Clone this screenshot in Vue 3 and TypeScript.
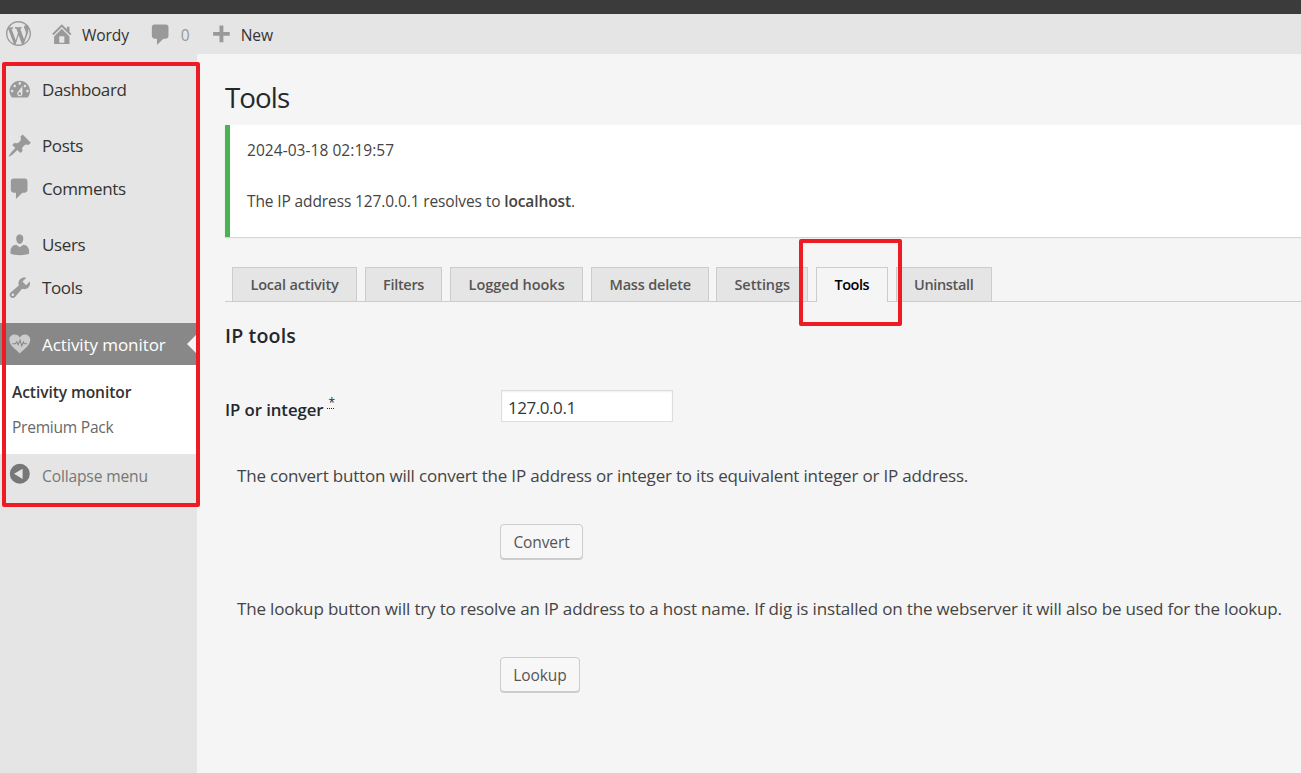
<script setup lang="ts">
interface MenuItem {
  label: string
  icon: string
  spaced?: boolean
}

const icons: Record<string, string> = {
  wordpress:
    'M20 10c0-5.51-4.49-10-10-10C4.48 0 0 4.49 0 10c0 5.52 4.48 10 10 10 5.51 0 10-4.48 10-10zM7.78 15.37L4.37 6.22c.55-.02 1.17-.08 1.17-.08.5-.06.44-1.13-.06-1.11 0 0-1.45.11-2.37.11-.18 0-.37 0-.58-.01C4.12 2.69 6.87 1.11 10 1.11c2.33 0 4.45.87 6.05 2.34-.68-.11-1.65.39-1.65 1.58 0 .74.45 1.36.9 2.1.35.61.55 1.36.55 2.46 0 1.49-1.4 5-1.4 5l-3.03-8.37c.54-.02.82-.17.82-.17.5-.05.44-1.25-.06-1.22 0 0-1.44.12-2.38.12-.87 0-2.33-.12-2.33-.12-.5-.03-.56 1.2-.06 1.22l.92.08 1.26 3.41zM17.41 10c.24-.64.74-1.87.43-4.25.7 1.29 1.05 2.71 1.05 4.25 0 3.29-1.73 6.24-4.4 7.78.97-2.59 1.94-5.2 2.92-7.78zM6.1 18.09C3.12 16.65 1.11 13.53 1.11 10c0-1.3.23-2.48.72-3.59C3.25 10.3 4.67 14.2 6.1 18.09zm4.03-6.63l2.58 6.98c-.86.29-1.76.45-2.71.45-.79 0-1.57-.11-2.29-.33.81-2.38 1.62-4.74 2.42-7.1z',
  home: 'M16 8.5l1.53 1.53-1.06 1.06L10 4.6l-6.47 6.49-1.06-1.06L10 2.5l4 4v-2h2v4zm-6-2.46l6 5.99V18H4v-5.97zM12 17v-5H8v5h4z',
  comment: 'M5 2h9c1.1 0 2 .9 2 2v7c0 1.1-.9 2-2 2h-2l-5 5v-5H5c-1.1 0-2-.9-2-2V4c0-1.1.9-2 2-2z',
  plus: 'M17 7v3h-5v5H9v-5H4V7h5V2h3v5h5z',
  dashboard:
    'M3.76 16h12.48c1.1-1.37 1.76-3.11 1.76-5 0-4.42-3.58-8-8-8s-8 3.58-8 8c0 1.89.66 3.63 1.76 5zM10 4c.55 0 1 .45 1 1s-.45 1-1 1-1-.45-1-1 .45-1 1-1zM6 6c.55 0 1 .45 1 1s-.45 1-1 1-1-.45-1-1 .45-1 1-1zm8 0c.55 0 1 .45 1 1s-.45 1-1 1-1-.45-1-1 .45-1 1-1zm-5.37 5.55L12 7v6c0 1.1-.9 2-2 2s-2-.9-2-2c0-.57.24-1.08.63-1.45zM4 10c.55 0 1 .45 1 1s-.45 1-1 1-1-.45-1-1 .45-1 1-1zm12 0c.55 0 1 .45 1 1s-.45 1-1 1-1-.45-1-1 .45-1 1-1zm-5 3c0-.55-.45-1-1-1s-1 .45-1 1 .45 1 1 1 1-.45 1-1z',
  pin: 'M10.44 3.02l1.82-1.82 6.36 6.35-1.83 1.82c-1.05-.68-2.48-.57-3.41.36l-.75.75c-.92.93-1.04 2.35-.35 3.41l-1.83 1.82-2.41-2.41-2.8 2.79c-.42.42-3.38 2.71-3.8 2.29s1.86-3.39 2.28-3.81l2.79-2.79L4.1 9.36l1.83-1.82c1.05.69 2.48.57 3.4-.36l.75-.75c.93-.92 1.05-2.35.36-3.41z',
  user: 'M10 9.25c-2.27 0-2.73-3.44-2.73-3.44C7 4.02 7.82 2 9.97 2c2.16 0 2.98 2.02 2.71 3.81 0 0-.41 3.44-2.68 3.44zm0 2.57L12.72 10c2.39 0 4.52 2.33 4.52 4.53v2.49s-3.65 1.13-7.24 1.13c-3.65 0-7.24-1.13-7.24-1.13v-2.49c0-2.25 1.94-4.48 4.47-4.48z',
  wrench:
    'M16.68 9.77c-1.34 1.34-3.3 1.67-4.95.99l-5.41 6.52c-.99.99-2.59.99-3.58 0s-.99-2.59 0-3.57l6.52-5.42c-.68-1.65-.35-3.61.99-4.95 1.28-1.28 3.12-1.62 4.72-1.06l-2.89 2.89 2.82 2.82 2.86-2.87c.53 1.58.18 3.39-1.08 4.65zM3.81 16.21c.4.39 1.04.39 1.43 0 .4-.4.4-1.04 0-1.43-.39-.4-1.03-.4-1.43 0-.39.39-.39 1.03 0 1.43z',
}

const menu: MenuItem[] = [
  { label: 'Dashboard', icon: 'dashboard' },
  { label: 'Posts', icon: 'pin', spaced: true },
  { label: 'Comments', icon: 'comment' },
  { label: 'Users', icon: 'user', spaced: true },
  { label: 'Tools', icon: 'wrench' },
]

const tabs = [
  { label: 'Local activity', key: 'local' },
  { label: 'Filters', key: 'filters' },
  { label: 'Logged hooks', key: 'hooks' },
  { label: 'Mass delete', key: 'mass' },
  { label: 'Settings', key: 'settings' },
  { label: 'Tools', key: 'tools' },
  { label: 'Uninstall', key: 'uninstall' },
]
const activeTab = 'tools'
</script>

<template>
  <div class="page">
    <div class="chrome"></div>
    <header class="adminbar">
      <svg class="wp" viewBox="0 0 20 20"><path :d="icons.wordpress" /></svg>
      <svg class="ico home" viewBox="0 0 20 20"><path :d="icons.home" /></svg>
      <span class="site">Wordy</span>
      <svg class="ico bubble" viewBox="0 0 20 20"><path :d="icons.comment" /></svg>
      <span class="count">0</span>
      <svg class="ico plus" viewBox="0 0 20 20"><path :d="icons.plus" /></svg>
      <span class="new">New</span>
    </header>

    <div class="body">
      <nav class="sidebar">
        <a v-for="m in menu" :key="m.label" class="item" :class="{ spaced: m.spaced }">
          <svg class="ico" viewBox="0 0 20 20"><path :d="icons[m.icon]" /></svg>
          <span>{{ m.label }}</span>
        </a>
        <a class="item spaced current">
          <svg class="ico" viewBox="0 0 20 20">
            <path d="M10 17.6C8.7 15.7 1.8 11.8 1.8 6.9 1.8 4.2 3.9 2.7 6 2.7c1.700 0 3.100.9 4 2.300.9-1.400 2.300-2.300 4-2.300 2.100 0 4.200 1.500 4.200 4.200 0 4.900-6.900 8.800-8.200 10.700z" />
            <path class="pulse" d="M4.200 9.900h2.400l1-1.500 1.200 2.300 1.400-3.600 1.300 4.600 1.300-3.100.7 1.300h2.200" />
          </svg>
          <span>Activity monitor</span>
          <i class="arrow"></i>
        </a>
        <div class="submenu">
          <b>Activity monitor</b>
          <span>Premium Pack</span>
        </div>
        <a class="item collapse">
          <svg class="ico" viewBox="0 0 20 20"><path fill-rule="evenodd" d="M10 2.200a7.800 7.800 0 1 0 0 15.600 7.800 7.800 0 0 0 0-15.600zM12.200 6v8L5.500 10z" /></svg>
          <span>Collapse menu</span>
        </a>
      </nav>

      <main class="content">
        <h1>Tools</h1>
        <section class="notice">
          <p class="stamp">2024-03-18 02:19:57</p>
          <p class="result">The IP address 127.0.0.1 resolves to <strong>localhost</strong>.</p>
        </section>
        <div class="tabs">
          <a v-for="t in tabs" :key="t.key" class="tab" :class="['t-' + t.key, { active: t.key === activeTab }]">{{ t.label }}</a>
        </div>
        <h2>IP tools</h2>
        <div class="field">
          <label>IP or integer <sup>*</sup></label>
          <input type="text" value="127.0.0.1" />
        </div>
        <p class="desc convert">The convert button will convert the IP address or integer to its equivalent integer or IP address.</p>
        <button class="b1">Convert</button>
        <p class="desc lookup">The lookup button will try to resolve an IP address to a host name. If dig is installed on the webserver it will also be used for the lookup.</p>
        <button class="b2">Lookup</button>
      </main>
    </div>

    <div class="mark mark-menu"></div>
    <div class="mark mark-tab"></div>
  </div>
</template>

<style>
body {
  margin: 0;
  overflow: hidden;
}
</style>

<style scoped>
* {
  box-sizing: border-box;
}
.page {
  position: relative;
  width: 1301px;
  height: 773px;
  overflow: hidden;
  display: flex;
  flex-direction: column;
  background: #f5f5f5;
  color: #444;
  font-family: 'Open Sans', 'Noto Sans', sans-serif;
  font-size: 17px;
  white-space: nowrap;
}
.chrome {
  height: 14px;
  background: #3b3b3b;
  flex: none;
}
.adminbar {
  height: 40px;
  flex: none;
  background: #e5e5e5;
  display: flex;
  align-items: center;
  padding: 2px 0 0 6px;
  font-size: 15.6px;
  color: #333;
}
svg {
  fill: #999;
  flex: none;
  display: block;
}
.ico {
  width: 25.6px;
  height: 25.6px;
}
.wp {
  width: 25px;
  height: 25px;
  margin-top: -4px;
}
.home {
  margin: -3px 0 0 18px;
}
.site {
  width: 66px;
  margin-left: 7.5px;
  letter-spacing: -0.15px;
}
.count {
  color: #999;
  margin-left: 7px;
  width: 27px;
}
.plus {
  margin-top: 1px;
}
.new {
  margin-left: 7.5px;
  letter-spacing: -0.2px;
}
.body {
  display: flex;
  flex: 1;
  min-height: 0;
}
.sidebar {
  width: 197px;
  flex: none;
  background: #e5e5e5;
  padding-top: 15px;
}
.item {
  display: flex;
  align-items: center;
  height: 43px;
  padding-left: 6.5px;
  color: #333;
  letter-spacing: -0.35px;
}
.item span {
  margin: -2px 0 0 9.9px;
}
.item .ico {
  margin-top: -1px;
}
.spaced {
  margin-top: 13px;
}
.current {
  height: 42px;
  background: #888;
  color: #fff;
  letter-spacing: -0.08px;
}
.current span {
  margin-top: 0;
}
.current .ico {
  fill: #ccc;
}
.pulse {
  fill: none;
  stroke: #888;
  stroke-width: 0.8;
}
.arrow {
  margin-left: auto;
  border: 10px solid transparent;
  border-right-color: #f5f5f5;
  border-left: 0;
}
.submenu {
  height: 89px;
  background: #fff;
  padding: 10px 0 0 12px;
  display: flex;
  flex-direction: column;
  font-size: 15.6px;
  line-height: 35px;
  color: #686868;
  letter-spacing: -0.27px;
}
.submenu b {
  font-weight: 600;
  color: #333;
  letter-spacing: -0.1px;
}
.collapse {
  font-size: 15.6px;
  color: #777;
  letter-spacing: -0.15px;
}
.collapse span {
  margin-top: 1px;
}
.collapse .ico {
  fill: #777;
  margin-top: -3px;
}
.content {
  flex: 1;
  min-width: 0;
  padding: 23px 0 0 28px;
}
h1 {
  margin: 0;
  height: 48px;
  line-height: 40px;
  font-size: 27.7px;
  font-weight: 400;
  color: #23282d;
  letter-spacing: -0.9px;
}
.notice {
  height: 112px;
  background: #fff;
  border-left: 5px solid #46b450;
  box-shadow: 0 1px 1px rgba(0, 0, 0, 0.13);
  padding: 13px 0 0 17px;
  font-size: 15.5px;
}
.notice p {
  margin: 0;
  line-height: 24px;
}
.stamp {
  letter-spacing: 0.05px;
}
.notice .result {
  margin-top: 27px;
  letter-spacing: -0.12px;
}
.notice strong {
  font-weight: 600;
}
.tabs {
  display: flex;
  align-items: flex-end;
  height: 65px;
  padding-left: 7px;
  border-bottom: 1px solid #ccc;
}
.tab {
  height: 34px;
  padding-left: 17.5px;
  border: 1px solid #ccc;
  border-bottom: 0;
  background: #e5e5e5;
  font-size: 14.5px;
  line-height: 34px;
  font-weight: 600;
  color: #555;
  margin-right: 8px;
  letter-spacing: -0.2px;
}
.t-local { width: 125px; }
.t-filters { width: 77px; padding-left: 17px; letter-spacing: -0.3px; }
.t-hooks { width: 133px; letter-spacing: 0; }
.t-mass { width: 118px; margin-right: 7px; }
.t-settings { width: 92px; letter-spacing: -0.1px; }
.t-tools { width: 72px; letter-spacing: -0.5px; }
.t-uninstall { width: 96px; padding-left: 17px; letter-spacing: -0.35px; }
.tab.active {
  height: 35px;
  margin-bottom: -1px;
  background: #f5f5f5;
  color: #000;
}
h2 {
  margin: 20px 0 0;
  height: 28px;
  line-height: 28px;
  font-size: 19.6px;
  font-weight: 600;
  color: #23282d;
  letter-spacing: 0.15px;
}
.field {
  display: flex;
  margin-top: 40px;
  height: 32px;
}
label {
  display: flex;
  width: 276px;
  line-height: 39px;
  font-size: 16.8px;
  font-weight: 600;
  color: #23282d;
  letter-spacing: -0.08px;
}
sup {
  width: 7px;
  height: 14px;
  margin: 5px 0 0 4px;
  padding-left: 1px;
  font-size: 12px;
  line-height: 15px;
  border-bottom: 1px dotted #23282d;
  font-weight: 400;
}
input {
  width: 172px;
  height: 32px;
  padding: 2px 6px 0;
  border: 1px solid #ddd;
  box-shadow: inset 0 1px 2px rgba(0, 0, 0, 0.07);
  background: #fff;
  color: #32373c;
  font: inherit;
  letter-spacing: -0.45px;
  outline: 0;
}
.desc {
  margin: 0 0 0 12px;
  height: 26px;
  line-height: 26px;
  letter-spacing: -0.19px;
}
.convert {
  margin-top: 41px;
}
button {
  display: block;
  margin: 35px 0 0 275px;
  height: 35px;
  padding: 1px 0 0;
  border: 1px solid #ccc;
  border-radius: 4px;
  background: #f7f7f7;
  box-shadow: 0 1px 0 #ccc;
  font: inherit;
  font-size: 15.5px;
  color: #555;
  letter-spacing: -0.1px;
}
.b1 { width: 83px; }
.b2 { width: 80px; }
.lookup {
  margin-top: 37px;
  letter-spacing: -0.163px;
}
.mark {
  position: absolute;
  border: 4px solid #ed1c24;
  border-radius: 2px;
}
.mark-menu {
  left: 2px;
  top: 62px;
  width: 198px;
  height: 445px;
}
.mark-tab {
  left: 799px;
  top: 239px;
  width: 103px;
  height: 87px;
}
</style>
